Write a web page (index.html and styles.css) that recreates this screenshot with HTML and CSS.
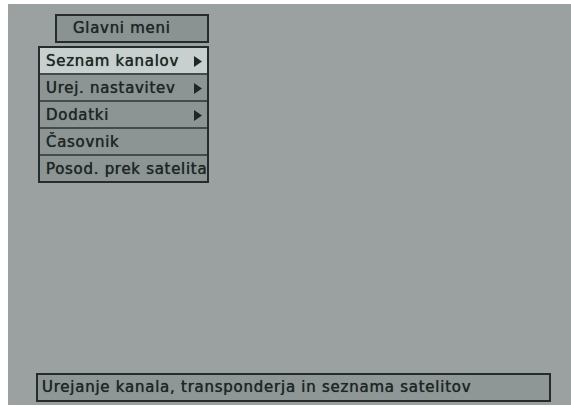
FILE: index.html
```html
<!DOCTYPE html>
<html>
<head>
<meta charset="utf-8">
<link rel="stylesheet" href="styles.css">
</head>
<body>
<div class="screen">
  <div class="title">Glavni meni</div>
  <div class="menu">
    <div class="row active"><span>Seznam kanalov</span><svg class="arrow" viewBox="0 0 8 11"><polygon points="0,0 8,5.5 0,11"/></svg></div>
    <div class="row"><span>Urej. nastavitev</span><svg class="arrow" viewBox="0 0 8 11"><polygon points="0,0 8,5.5 0,11"/></svg></div>
    <div class="row"><span>Dodatki</span><svg class="arrow" viewBox="0 0 8 11"><polygon points="0,0 8,5.5 0,11"/></svg></div>
    <div class="row"><span>Časovnik</span></div>
    <div class="row"><span>Posod. prek satelita</span></div>
  </div>
  <div class="status">Urejanje kanala, transponderja in seznama satelitov</div>
</div>
</body>
</html>
```

FILE: styles.css
```css
html, body {
  margin: 0;
  padding: 0;
  background: #ffffff;
}
body {
  width: 571px;
  height: 409px;
  overflow: hidden;
}
.screen {
  margin: 4px 0 0 8px;
  width: 563px;
  height: 401px;
  background: #9ba1a1;
  display: flex;
  flex-direction: column;
  font-family: "DejaVu Sans", sans-serif;
  font-size: 15px;
  letter-spacing: 0.7px;
  color: #1f2626;
  text-shadow: 0 0 0.7px #1f2626;
}
.title {
  box-sizing: border-box;
  margin: 10px 0 0 47px;
  width: 154px;
  height: 29px;
  border: 2px solid #262b2b;
  background: #8b9292;
  padding-left: 16px;
  line-height: 25px;
}
.menu {
  box-sizing: border-box;
  margin: 3px 0 0 30px;
  width: 171px;
  height: 137px;
  border: 2px solid #262b2b;
  background: #8d9494;
  display: flex;
  flex-direction: column;
  overflow: hidden;
}
.row {
  box-sizing: border-box;
  height: 27px;
  display: flex;
  align-items: center;
  padding-left: 6px;
  white-space: nowrap;
  position: relative;
  border-bottom: 2px solid #454b4b;
}
.row:last-child {
  border-bottom: none;
  height: 25px;
}
.row.active {
  background: #c8cfcf;
}
.arrow {
  position: absolute;
  right: 5px;
  top: 8px;
  width: 8px;
  height: 11px;
  fill: #1f2626;
}
.status {
  box-sizing: border-box;
  margin: auto 0 3px 28px;
  width: 515px;
  height: 29px;
  border: 2px solid #262b2b;
  background: #8f9696;
  padding-left: 4px;
  line-height: 25px;
  letter-spacing: 0.75px;
  white-space: nowrap;
}
```
